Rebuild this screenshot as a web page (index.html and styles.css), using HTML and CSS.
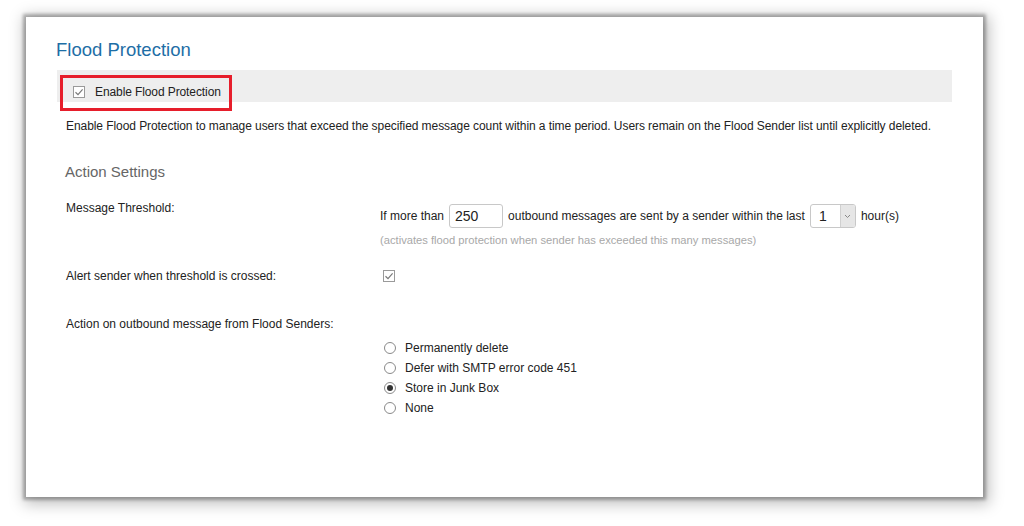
FILE: index.html
```html
<!DOCTYPE html>
<html>
<head>
<meta charset="utf-8">
<link rel="stylesheet" href="styles.css">
</head>
<body>
<div class="panel">
  <h1 class="title">Flood Protection</h1>
  <div class="enable-bar">
    <label class="enable-label">
      <svg class="cb" width="12" height="12" viewBox="0 0 12 12"><rect x="0.5" y="0.5" width="11" height="11" fill="#fff" stroke="#9a9a9a"/><path d="M2.5 6.2 L5 8.6 L9.6 3.4" fill="none" stroke="#7a7a7a" stroke-width="1.2"/></svg>
      <span>Enable Flood Protection</span>
    </label>
    <div class="highlight"></div>
  </div>
  <p class="desc">Enable Flood Protection to manage users that exceed the specified message count within a time period. Users remain on the Flood Sender list until explicitly deleted.</p>
  <h2 class="subtitle">Action Settings</h2>
  <div class="form">
    <div class="row row-threshold">
      <div class="lbl">Message Threshold:</div>
      <div class="val">
        <div class="inline">
          <span>If more than</span>
          <span class="textbox">250</span>
          <span>outbound messages are sent by a sender within the last</span>
          <span class="select"><span class="sel-val">1</span><span class="sel-arrow"><svg width="7" height="5" viewBox="0 0 7 5"><path d="M1 1 L3.5 3.5 L6 1" fill="none" stroke="#888" stroke-width="1"/></svg></span></span>
          <span>hour(s)</span>
        </div>
        <div class="hint">(activates flood protection when sender has exceeded this many messages)</div>
      </div>
    </div>
    <div class="row row-alert">
      <div class="lbl">Alert sender when threshold is crossed:</div>
      <div class="val">
        <svg class="cb" width="12" height="12" viewBox="0 0 12 12"><rect x="0.5" y="0.5" width="11" height="11" fill="#fff" stroke="#9a9a9a"/><path d="M2.5 6.2 L5 8.6 L9.6 3.4" fill="none" stroke="#7a7a7a" stroke-width="1.2"/></svg>
      </div>
    </div>
    <div class="row row-action">
      <div class="lbl">Action on outbound message from Flood Senders:</div>
    </div>
    <div class="row row-radios">
      <div class="lbl"></div>
      <div class="val radios">
        <div class="radio"><span class="rb"></span><span>Permanently delete</span></div>
        <div class="radio"><span class="rb"></span><span>Defer with SMTP error code 451</span></div>
        <div class="radio"><span class="rb on"></span><span>Store in Junk Box</span></div>
        <div class="radio"><span class="rb"></span><span>None</span></div>
      </div>
    </div>
  </div>
</div>
</body>
</html>
```

FILE: styles.css
```css
* { box-sizing: border-box; }
html, body { margin: 0; padding: 0; background: #fff; }
body {
  font-family: "Liberation Sans", Arial, sans-serif;
  font-size: 12px;
  color: #222;
  min-height: 526px;
  padding-top: 17px;
}
.panel {
  margin: 0 0 0 26px;
  width: 957px;
  height: 480px;
  background: #fff;
  box-shadow: 0 0 3px 3px rgba(0,0,0,0.28), 2px 3px 14px 4px rgba(0,0,0,0.25);
  padding-top: 22px;
}
.title {
  margin: 0 0 0 30px;
  font-weight: normal;
  font-size: 18.5px;
  line-height: 22px;
  color: #1e6ea6;
}
.enable-bar {
  position: relative;
  margin: 9px 0 0 31px;
  width: 895px;
  height: 32px;
  background: #eeeeee;
  display: flex;
  align-items: center;
  padding-left: 16px;
}
.enable-label {
  display: flex;
  align-items: center;
  gap: 10px;
  margin-top: 11px;
  color: #222;
  letter-spacing: -0.1px;
}
.cb { display: block; }
.highlight {
  position: absolute;
  left: 3px;
  top: 5px;
  width: 172px;
  height: 36px;
  border: 3px solid #e61e2b;
}
.desc {
  margin: 17px 0 0 40px;
  line-height: 14px;
  letter-spacing: -0.07px;
}
.subtitle {
  margin: 30px 0 0 39px;
  font-weight: normal;
  font-size: 15px;
  line-height: 18px;
  color: #666;
}
.form { margin: 18px 0 0 40px; }
.row { display: grid; grid-template-columns: 314px 1fr; }
.lbl { line-height: 14px; }
.row-threshold .lbl { padding-top: 2px; }
.inline {
  display: flex;
  align-items: center;
  gap: 4px;
  margin-top: 5px;
  font-size: 12px;
}
.textbox {
  display: inline-block;
  width: 54px;
  height: 24px;
  border: 1px solid #c8c8c8;
  border-radius: 3px;
  padding: 3px 0 0 5px;
  font-size: 14px;
  line-height: 16px;
  color: #222;
  margin: 0 1px;
}
.select {
  display: inline-flex;
  width: 46px;
  height: 24px;
  border: 1px solid #c8c8c8;
  border-radius: 3px;
  overflow: hidden;
  margin: 0 1px;
}
.sel-val {
  flex: 1;
  padding: 3px 0 0 8px;
  font-size: 14px;
  line-height: 16px;
}
.sel-arrow {
  width: 15px;
  background: #e6e6e6;
  border-left: 1px solid #d0d0d0;
  display: flex;
  align-items: center;
  justify-content: center;
}
.hint {
  margin-top: 6px;
  font-size: 11.2px;
  color: #a8a8a8;
  line-height: 13px;
}
.row-alert { margin-top: 22px; }
.row-alert .val { padding: 1px 0 0 3px; }
.row-action { margin-top: 34px; }
.radios { margin-top: 7px; }
.radio {
  display: flex;
  align-items: center;
  gap: 9px;
  height: 20px;
  padding-left: 4px;
}
.rb {
  width: 12px;
  height: 12px;
  border: 1px solid #8a8a8a;
  border-radius: 50%;
  background: #fff;
  position: relative;
}
.rb.on::after {
  content: "";
  position: absolute;
  left: 2px; top: 2px;
  width: 6px; height: 6px;
  border-radius: 50%;
  background: #333;
}
```
